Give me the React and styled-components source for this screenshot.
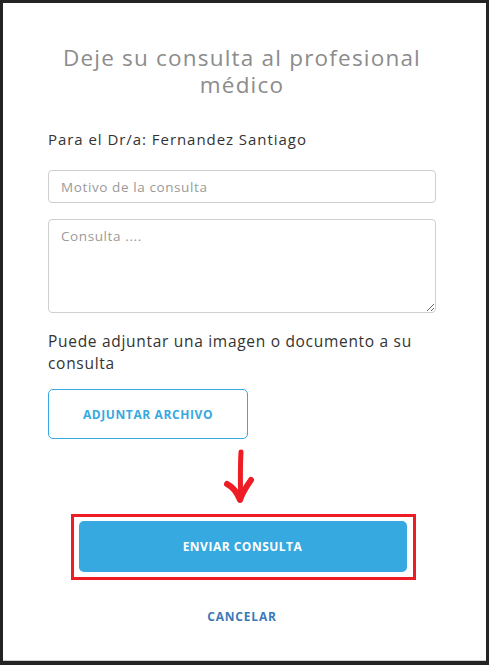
import styled, { createGlobalStyle } from 'styled-components';

const GlobalStyle = createGlobalStyle`
  html, body {
    margin: 0;
    padding: 0;
    background: #242424;
  }
  body {
    font-family: "Open Sans", "Liberation Sans", sans-serif;
  }
`;

const Overlay = styled.div`
  width: 489px;
  height: 665px;
  padding: 3px 3px 0 3px;
  box-sizing: border-box;
  background: #242424;
`;

const Modal = styled.div`
  width: 483px;
  height: 658px;
  box-sizing: border-box;
  background: #ffffff;
  border-bottom: 1px solid #d0d0d0;
  padding: 41px 50px 0 45px;
  display: flex;
  flex-direction: column;
`;

const Title = styled.h2`
  margin: 0;
  font-family: "Open Sans", sans-serif;
  font-weight: 400;
  font-size: 22.5px;
  line-height: 27px;
  letter-spacing: 1.2px;
  color: #8c8c8c;
  text-align: center;
`;

const Recipient = styled.p`
  margin: 31px 0 0 0;
  font-size: 15px;
  line-height: 20px;
  letter-spacing: 0.95px;
  color: #333333;
`;

const Field = styled.input`
  margin-top: 21px;
  height: 33px;
  box-sizing: border-box;
  border: 1px solid #cfcfcf;
  border-radius: 4px;
  padding: 0 12px;
  font-family: "Open Sans", sans-serif;
  font-size: 13.5px;
  letter-spacing: 0.6px;
  color: #333;
  &::placeholder { color: #9a9a9a; }
`;

const Area = styled.textarea`
  margin-top: 16px;
  height: 94px;
  box-sizing: border-box;
  border: 1px solid #cfcfcf;
  border-radius: 4px;
  padding: 7px 12px;
  font-family: "Open Sans", sans-serif;
  font-size: 13.5px;
  letter-spacing: 0.6px;
  color: #333;
  resize: vertical;
  &::placeholder { color: #9a9a9a; }
`;

const Hint = styled.p`
  margin: 17px 0 0 0;
  font-size: 15.5px;
  line-height: 22px;
  letter-spacing: 0.7px;
  color: #333333;
`;

const OutlineButton = styled.button`
  margin-top: 15px;
  width: 200px;
  height: 50px;
  box-sizing: border-box;
  background: #fff;
  border: 1px solid #36a9e0;
  border-radius: 5px;
  color: #36a9e0;
  font-family: "Open Sans", sans-serif;
  font-weight: 700;
  font-size: 12px;
  letter-spacing: 0.6px;
  text-transform: uppercase;
`;

const Arrow = styled.svg`
  display: block;
  align-self: center;
  margin-top: 10px;
  margin-left: -6px;
`;

const Highlight = styled.div`
  align-self: center;
  margin-top: 10px;
  margin-left: 2px;
  border: 3px solid #ee1c24;
  padding: 4px 6px 5px 5px;
`;

const PrimaryButton = styled.button`
  display: block;
  width: 328px;
  height: 51px;
  border: none;
  border-radius: 5px;
  background: #36a9e0;
  color: #fff;
  font-family: "Open Sans", sans-serif;
  font-weight: 700;
  font-size: 12px;
  letter-spacing: 0.5px;
  text-transform: uppercase;
`;

const LinkButton = styled.button`
  align-self: center;
  margin-top: 28px;
  background: none;
  border: none;
  padding: 0;
  color: #3b7ab7;
  font-family: "Open Sans", sans-serif;
  font-weight: 700;
  font-size: 12px;
  letter-spacing: 0.8px;
  text-transform: uppercase;
`;

export default function App() {
  return (
    <>
      <GlobalStyle />
      <Overlay>
        <Modal>
          <Title>Deje su consulta al profesional médico</Title>
          <Recipient>Para el Dr/a: Fernandez Santiago</Recipient>
          <Field placeholder="Motivo de la consulta" />
          <Area placeholder="Consulta ...." />
          <Hint>Puede adjuntar una imagen o documento a su consulta</Hint>
          <OutlineButton>Adjuntar archivo</OutlineButton>
          <Arrow width="30" height="55" viewBox="0 0 30 55">
            <path d="M17 3 C16 18 16.5 34 16.5 50" stroke="#ee1c24" strokeWidth="5" fill="none" strokeLinecap="round" />
            <path d="M3 35 C9 38 13 43 16 51 C18 45 22 38 27 31" stroke="#ee1c24" strokeWidth="6" fill="none" strokeLinecap="round" strokeLinejoin="round" />
          </Arrow>
          <Highlight>
            <PrimaryButton>Enviar consulta</PrimaryButton>
          </Highlight>
          <LinkButton>Cancelar</LinkButton>
        </Modal>
      </Overlay>
    </>
  );
}
